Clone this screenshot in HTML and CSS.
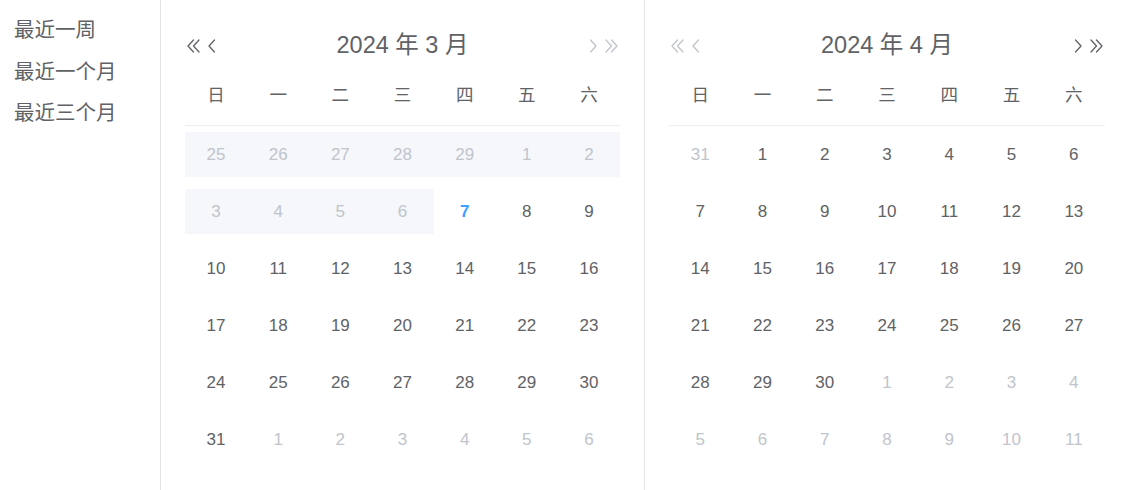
FILE: index.html
```html
<!DOCTYPE html>
<html lang="zh-CN">
<head>
<meta charset="utf-8">
<link rel="stylesheet" href="styles.css">
</head>
<body>
<div class="picker">
  <aside class="sidebar">
    <div class="shortcut">最近一周</div>
    <div class="shortcut">最近一个月</div>
    <div class="shortcut">最近三个月</div>
  </aside>

  <section class="panel panel-left">
    <div class="header">
      <div class="nav nav-start">
        <svg class="ico dbl" viewBox="0 0 13 14"><polyline points="6.5,1 1,7 6.5,13"/><polyline points="12,1 6.5,7 12,13"/></svg>
        <svg class="ico sgl" viewBox="0 0 7 14"><polyline points="6.5,1 1,7 6.5,13"/></svg>
      </div>
      <div class="title">2024 年 3 月</div>
      <div class="nav nav-end off">
        <svg class="ico sgl" viewBox="0 0 7 14"><polyline points="0.5,1 6,7 0.5,13"/></svg>
        <svg class="ico dbl" viewBox="0 0 13 14"><polyline points="1,1 6.5,7 1,13"/><polyline points="6.5,1 12,7 6.5,13"/></svg>
      </div>
    </div>
    <div class="week"><span>日</span><span>一</span><span>二</span><span>三</span><span>四</span><span>五</span><span>六</span></div>
    <div class="days">
      <div class="cell dis"><span>25</span></div><div class="cell dis"><span>26</span></div><div class="cell dis"><span>27</span></div><div class="cell dis"><span>28</span></div><div class="cell dis"><span>29</span></div><div class="cell dis"><span>1</span></div><div class="cell dis"><span>2</span></div>
      <div class="cell dis"><span>3</span></div><div class="cell dis"><span>4</span></div><div class="cell dis"><span>5</span></div><div class="cell dis"><span>6</span></div><div class="cell today"><span>7</span></div><div class="cell"><span>8</span></div><div class="cell"><span>9</span></div>
      <div class="cell"><span>10</span></div><div class="cell"><span>11</span></div><div class="cell"><span>12</span></div><div class="cell"><span>13</span></div><div class="cell"><span>14</span></div><div class="cell"><span>15</span></div><div class="cell"><span>16</span></div>
      <div class="cell"><span>17</span></div><div class="cell"><span>18</span></div><div class="cell"><span>19</span></div><div class="cell"><span>20</span></div><div class="cell"><span>21</span></div><div class="cell"><span>22</span></div><div class="cell"><span>23</span></div>
      <div class="cell"><span>24</span></div><div class="cell"><span>25</span></div><div class="cell"><span>26</span></div><div class="cell"><span>27</span></div><div class="cell"><span>28</span></div><div class="cell"><span>29</span></div><div class="cell"><span>30</span></div>
      <div class="cell"><span>31</span></div><div class="cell other"><span>1</span></div><div class="cell other"><span>2</span></div><div class="cell other"><span>3</span></div><div class="cell other"><span>4</span></div><div class="cell other"><span>5</span></div><div class="cell other"><span>6</span></div>
    </div>
  </section>

  <section class="panel panel-right">
    <div class="header">
      <div class="nav nav-start off">
        <svg class="ico dbl" viewBox="0 0 13 14"><polyline points="6.5,1 1,7 6.5,13"/><polyline points="12,1 6.5,7 12,13"/></svg>
        <svg class="ico sgl" viewBox="0 0 7 14"><polyline points="6.5,1 1,7 6.5,13"/></svg>
      </div>
      <div class="title">2024 年 4 月</div>
      <div class="nav nav-end">
        <svg class="ico sgl" viewBox="0 0 7 14"><polyline points="0.5,1 6,7 0.5,13"/></svg>
        <svg class="ico dbl" viewBox="0 0 13 14"><polyline points="1,1 6.5,7 1,13"/><polyline points="6.5,1 12,7 6.5,13"/></svg>
      </div>
    </div>
    <div class="week"><span>日</span><span>一</span><span>二</span><span>三</span><span>四</span><span>五</span><span>六</span></div>
    <div class="days">
      <div class="cell other"><span>31</span></div><div class="cell"><span>1</span></div><div class="cell"><span>2</span></div><div class="cell"><span>3</span></div><div class="cell"><span>4</span></div><div class="cell"><span>5</span></div><div class="cell"><span>6</span></div>
      <div class="cell"><span>7</span></div><div class="cell"><span>8</span></div><div class="cell"><span>9</span></div><div class="cell"><span>10</span></div><div class="cell"><span>11</span></div><div class="cell"><span>12</span></div><div class="cell"><span>13</span></div>
      <div class="cell"><span>14</span></div><div class="cell"><span>15</span></div><div class="cell"><span>16</span></div><div class="cell"><span>17</span></div><div class="cell"><span>18</span></div><div class="cell"><span>19</span></div><div class="cell"><span>20</span></div>
      <div class="cell"><span>21</span></div><div class="cell"><span>22</span></div><div class="cell"><span>23</span></div><div class="cell"><span>24</span></div><div class="cell"><span>25</span></div><div class="cell"><span>26</span></div><div class="cell"><span>27</span></div>
      <div class="cell"><span>28</span></div><div class="cell"><span>29</span></div><div class="cell"><span>30</span></div><div class="cell other"><span>1</span></div><div class="cell other"><span>2</span></div><div class="cell other"><span>3</span></div><div class="cell other"><span>4</span></div>
      <div class="cell other"><span>5</span></div><div class="cell other"><span>6</span></div><div class="cell other"><span>7</span></div><div class="cell other"><span>8</span></div><div class="cell other"><span>9</span></div><div class="cell other"><span>10</span></div><div class="cell other"><span>11</span></div>
    </div>
  </section>
</div>
</body>
</html>
```

FILE: styles.css
```css
* { box-sizing: border-box; }
html, body {
  margin: 0;
  padding: 0;
  background: #fff;
}
body {
  width: 1124px;
  height: 490px;
  overflow: hidden;
  font-family: "Liberation Sans", Arial, "Noto Sans CJK SC", sans-serif;
  color: #606266;
}
.picker {
  display: flex;
  height: 490px;
}
.sidebar {
  flex: 0 0 161px;
  border-right: 1px solid #e4e4e4;
  padding-top: 8px;
}
.shortcut {
  font-family: "Noto Sans CJK SC", sans-serif;
  font-size: 20.5px;
  line-height: 41.5px;
  padding-left: 14px;
  color: #606266;
}
.panel {
  flex: 0 0 484px;
  padding: 24px 24px 0 24px;
}
.panel-left {
  border-right: 1px solid #e4e4e4;
}
.header {
  height: 42px;
  display: grid;
  grid-template-columns: 1fr auto 1fr;
  align-items: center;
}
.title {
  font-size: 23.5px;
  color: #606266;
  line-height: 42px;
  padding-bottom: 1px;
}
.nav {
  display: flex;
  align-items: center;
  gap: 8px;
  color: #606266;
}
.nav.off { color: #c0c4cc; }
.nav-start { justify-self: start; padding-left: 2px; }
.nav-end { justify-self: end; padding-right: 2px; }
.ico {
  height: 14px;
  fill: none;
  stroke: currentColor;
  stroke-width: 1.3;
  stroke-linecap: round;
  stroke-linejoin: round;
}
.ico.dbl { width: 13px; }
.ico.sgl { width: 7px; }
.week {
  display: grid;
  grid-template-columns: repeat(7, 1fr);
  height: 60px;
  border-bottom: 1px solid #ebeef5;
  align-items: center;
  text-align: center;
  font-family: "Noto Sans CJK SC", sans-serif;
  font-size: 17.5px;
  color: #606266;
  padding-bottom: 5px;
}
.days {
  display: grid;
  grid-template-columns: repeat(7, 1fr);
  grid-auto-rows: 57px;
}
.cell {
  padding: 6px 0;
}
.cell span {
  display: flex;
  height: 45px;
  align-items: center;
  justify-content: center;
  font-size: 17px;
  color: #606266;
}
.cell.dis span {
  background: #f5f7fa;
  color: #c0c4cc;
}
.cell.other span { color: #c0c4cc; }
.cell.today span {
  color: #409eff;
  font-weight: bold;
}
```
